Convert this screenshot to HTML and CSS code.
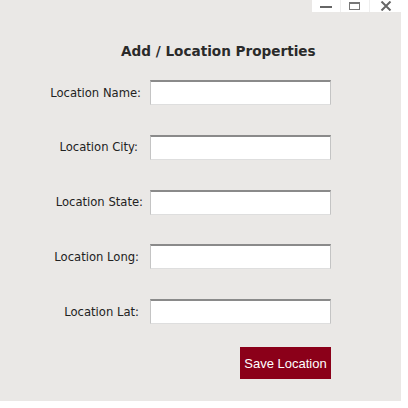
FILE: index.html
```html
<!DOCTYPE html>
<html>
<head>
<meta charset="utf-8">
<link rel="stylesheet" href="styles.css">
</head>
<body>
<div class="window">
  <div class="titlebar">
    <div class="ctl">
      <svg width="12" height="10" viewBox="0 0 12 10"><rect x="0" y="5" width="12" height="2" fill="#666"/></svg>
    </div>
    <div class="ctl">
      <svg width="12" height="10" viewBox="0 0 12 10"><rect x="0.5" y="1.5" width="10" height="7" fill="none" stroke="#777"/><rect x="0" y="1" width="11" height="2" fill="#777"/></svg>
    </div>
    <div class="ctl last">
      <svg width="12" height="10" viewBox="0 0 12 10"><path d="M1.5 0.5 L10.5 9.5 M10.5 0.5 L1.5 9.5" stroke="#666" stroke-width="2"/></svg>
    </div>
  </div>
  <h1 class="title">Add / Location Properties</h1>
  <div class="form">
    <label class="lbl">Location Name:</label><div class="field"></div>
    <label class="lbl lbl-city">Location City:</label><div class="field"></div>
    <label class="lbl lbl-state">Location State:</label><div class="field"></div>
    <label class="lbl lbl-long">Location Long:</label><div class="field"></div>
    <label class="lbl lbl-lat">Location Lat:</label><div class="field"></div>
  </div>
  <div class="actions">
    <button class="save">Save Location</button>
  </div>
</div>
</body>
</html>
```
FILE: styles.css
```css
html, body {
  margin: 0;
  padding: 0;
  background: #ffffff;
}
.window {
  width: 401px;
  height: 401px;
  background: #eae8e6;
  font-family: "DejaVu Sans", sans-serif;
  color: #222;
  display: flex;
  flex-direction: column;
}
.titlebar {
  display: flex;
  justify-content: flex-end;
  height: 12px;
}
.ctl {
  width: 28px;
  height: 12px;
  background: #ffffff;
  border-right: 1px solid #eeeeee;
  display: flex;
  align-items: center;
  justify-content: center;
}
.ctl.last {
  width: 31px;
  border-right: none;
}
.title {
  margin: 31px 0 0 121px;
  font-size: 13.6px;
  font-weight: bold;
  color: #2a2a2a;
  line-height: 16px;
}
.form {
  display: grid;
  grid-template-columns: 141px 181px;
  column-gap: 9px;
  row-gap: 29.75px;
  margin-top: 21px;
  align-items: center;
}
.lbl {
  text-align: right;
  font-size: 11.6px;
  color: #222;
}
.lbl-city { margin-right: 3px; }
.lbl-state { margin-right: -2px; }
.lbl-long { margin-right: 2px; }
.lbl-lat { margin-right: 2px; }
.field {
  height: 22px;
  background: #fff;
  border-top: 2px solid #8a8a8a;
  border-left: 1px solid #c4c4c4;
  border-right: 1px solid #c4c4c4;
  border-bottom: 1px solid #dedede;
}
.actions {
  display: flex;
  justify-content: flex-start;
  padding-left: 240px;
  margin-top: 23px;
}
.save {
  width: 91px;
  height: 32px;
  background: #8b0019;
  color: #fff;
  border: none;
  font-family: "Liberation Sans", Arial, sans-serif;
  font-size: 13px;
  padding: 0;
}
```
